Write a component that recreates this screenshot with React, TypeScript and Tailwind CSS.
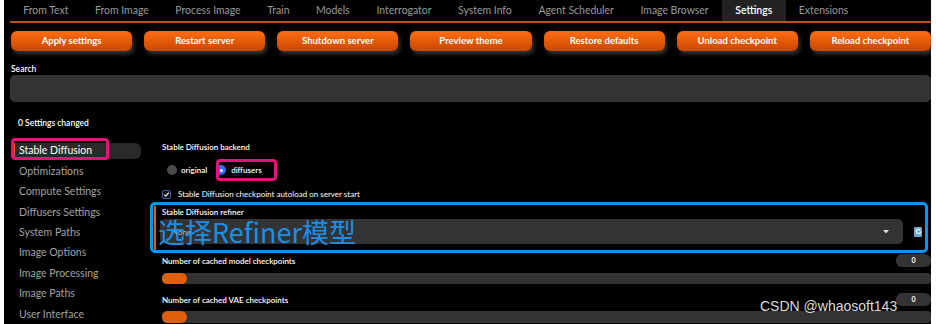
import React from "react";

const tabs = [
  "From Text",
  "From Image",
  "Process Image",
  "Train",
  "Models",
  "Interrogator",
  "System Info",
  "Agent Scheduler",
  "Image Browser",
  "Settings",
  "Extensions",
];

const buttons = [
  "Apply settings",
  "Restart server",
  "Shutdown server",
  "Preview theme",
  "Restore defaults",
  "Unload checkpoint",
  "Reload checkpoint",
];

const sideItems = [
  "Stable Diffusion",
  "Optimizations",
  "Compute Settings",
  "Diffusers Settings",
  "System Paths",
  "Image Options",
  "Image Processing",
  "Image Paths",
  "User Interface",
];

export default function App() {
  return (
    <div
      className="w-[936px] h-[324px] bg-white overflow-hidden flex"
      style={{ fontFamily: "Lato, 'Noto Sans', sans-serif" }}
    >
      <div className="relative ml-[4px] w-[927px] h-[324px] bg-black overflow-hidden flex flex-col">
        {/* Tabs */}
        <div className="ml-[6px] h-[23px] flex items-stretch border-b-2 border-[#b5520f]">
          {tabs.map((t) => (
            <div
              key={t}
              className={
                "px-[13.3px] flex items-center text-[10.45px] leading-none " +
                (t === "Settings"
                  ? "bg-[#222222] text-white font-semibold"
                  : "text-[#9a9a9a]")
              }
            >
              {t}
            </div>
          ))}
        </div>

        {/* Buttons */}
        <div className="mt-[8px] pl-[7px] flex gap-[12px]">
          {buttons.map((b) => (
            <div
              key={b}
              className="flex-1 h-[20px] rounded-[6px] bg-gradient-to-b from-[#ff6d12] to-[#c94700] shadow-[2px_3px_4px_rgba(60,60,60,0.9)] flex items-center justify-center text-white text-[9.5px] font-bold leading-none"
            >
              {b}
            </div>
          ))}
        </div>

        {/* Search */}
        <div className="mt-[13px] pl-[7px] h-[10px] flex items-center text-white text-[8.5px] font-semibold leading-none">
          Search
        </div>
        <div className="mt-[1px] ml-[6px] h-[27px] rounded-[5px] bg-[#333333]" />

        <div className="mt-[16px] pl-[14px] h-[12px] flex items-center text-white text-[8.5px] font-semibold leading-none">
          0 Settings changed
        </div>

        {/* Body */}
        <div className="mt-[11px] flex">
          {/* Sidebar */}
          <div className="w-[150px] flex flex-col">
            {sideItems.map((s, i) => (
              <div key={s} className="h-[20.4px] flex items-center">
                {i === 0 ? (
                  <div className="ml-[9px] w-[128px] h-[16px] bg-[#2a2a2a] rounded-r-[6px] border-l-2 border-[#e0600f] flex items-center pl-[4px] text-white text-[10.5px] leading-none">
                    {s}
                  </div>
                ) : (
                  <div className="pl-[15px] text-[#a3a3a3] text-[10.5px] leading-none">
                    {s}
                  </div>
                )}
              </div>
            ))}
          </div>

          {/* Main */}
          <div className="flex-1 flex flex-col pt-[1px]">
            <div className="pl-[8px] h-[12px] flex items-center text-white text-[8px] font-semibold leading-none">
              Stable Diffusion backend
            </div>
            <div className="mt-[10px] pl-[13px] h-[14px] flex items-center text-white text-[8px] font-semibold leading-none">
              <div className="w-[10px] h-[10px] rounded-full bg-[#4a4a4a]" />
              <span className="ml-[4px]">original</span>
              <div className="ml-[9px] w-[10px] h-[10px] rounded-full bg-[#2f6ff0] flex items-center justify-center">
                <div className="w-[3px] h-[3px] rounded-full bg-white" />
              </div>
              <span className="ml-[5px]">diffusers</span>
            </div>
            <div className="mt-[11px] pl-[8px] h-[12px] flex items-center text-white text-[8px] leading-none">
              <div className="w-[9px] h-[9px] rounded-[2px] border border-[#3b5bbb] bg-[#111] flex items-center justify-center">
                <svg width="7" height="7" viewBox="0 0 8 8">
                  <path d="M1.5 4.2 L3.2 6 L6.5 1.8" stroke="white" strokeWidth="1.3" fill="none" />
                </svg>
              </div>
              <span className="ml-[7px]">Stable Diffusion checkpoint autoload on server start</span>
            </div>

            {/* Refiner block */}
            <div className="mt-[6px] border-l-2 border-[#e0600f] pl-[6px] pb-[6px]">
              <div className="h-[12px] flex items-center text-white text-[8px] font-semibold leading-none">
                Stable Diffusion refiner
              </div>
              <div className="mt-[1px] flex items-center">
                <div className="-ml-[2px] w-[743px] h-[25px] rounded-[5px] bg-[#333333] flex items-center pl-[12px] pr-[14px] justify-between text-[#bdbdbd] text-[8px] leading-none">
                  <span>None</span>
                  <svg width="6" height="4" viewBox="0 0 6 4">
                    <path d="M0 0 L6 0 L3 3.5 Z" fill="#dddddd" />
                  </svg>
                </div>
                <div className="ml-[11px] w-[8px] h-[10px] rounded-[1px] bg-[#6ea6d8] flex items-center justify-center">
                  <svg width="7" height="7" viewBox="0 0 10 10">
                    <path d="M8 5 A3 3 0 1 1 6.5 2.4" stroke="white" strokeWidth="1.6" fill="none" />
                    <path d="M5.5 0.8 L8.3 2.2 L6 4 Z" fill="white" />
                  </svg>
                </div>
              </div>
            </div>

            {/* cached model checkpoints */}
            <div className="mt-[4px] pl-[8px] h-[13px] flex items-center justify-between text-white text-[8px] font-semibold leading-none">
              <span>Number of cached model checkpoints</span>
              <div className="w-[35px] h-[13px] rounded-[6px] bg-[#333333] flex items-center justify-center text-[7px] font-bold">
                0
              </div>
            </div>
            <div className="mt-[6px] ml-[8px] h-[11px] rounded-[4px] bg-[#333333] flex">
              <div className="w-[25px] h-[11px] rounded-full bg-[#e0600a]" />
            </div>

            {/* VAE */}
            <div className="mt-[9px] pl-[8px] h-[13px] flex items-center justify-between text-white text-[8px] font-semibold leading-none">
              <span>Number of cached VAE checkpoints</span>
              <div className="w-[35px] h-[13px] rounded-[6px] bg-[#333333] flex items-center justify-center text-[7px] font-bold">
                0
              </div>
            </div>
            <div className="mt-[5px] ml-[8px] h-[12px] rounded-[4px] bg-[#333333] flex">
              <div className="w-[25px] h-[12px] rounded-full bg-[#e0600a]" />
            </div>
          </div>
        </div>

        {/* Annotations */}
        <div className="absolute left-[7px] top-[138px] w-[98px] h-[22px] border-[3px] border-[#e0157a] rounded-[4px]" />
        <div className="absolute left-[212px] top-[159px] w-[61px] h-[22px] border-[3px] border-[#e0157a] rounded-[4px]" />
        <div className="absolute left-[146px] top-[202px] w-[778px] h-[51px] border-[3px] border-[#0a96f0] rounded-[5px]" />
        <div
          className="absolute left-[154px] top-[218px] text-[27px] leading-none text-[#1b8fe8] whitespace-nowrap"
          style={{ fontFamily: "'Noto Sans CJK SC', 'Noto Sans', sans-serif" }}
        >
          选择Refiner模型
        </div>
        <div
          className="absolute left-[756px] top-[299px] text-[14px] leading-none text-[#dcdcdc] whitespace-nowrap"
          style={{ fontFamily: "'Liberation Sans', Arial, sans-serif" }}
        >
          CSDN @whaosoft143
        </div>
      </div>
    </div>
  );
}
